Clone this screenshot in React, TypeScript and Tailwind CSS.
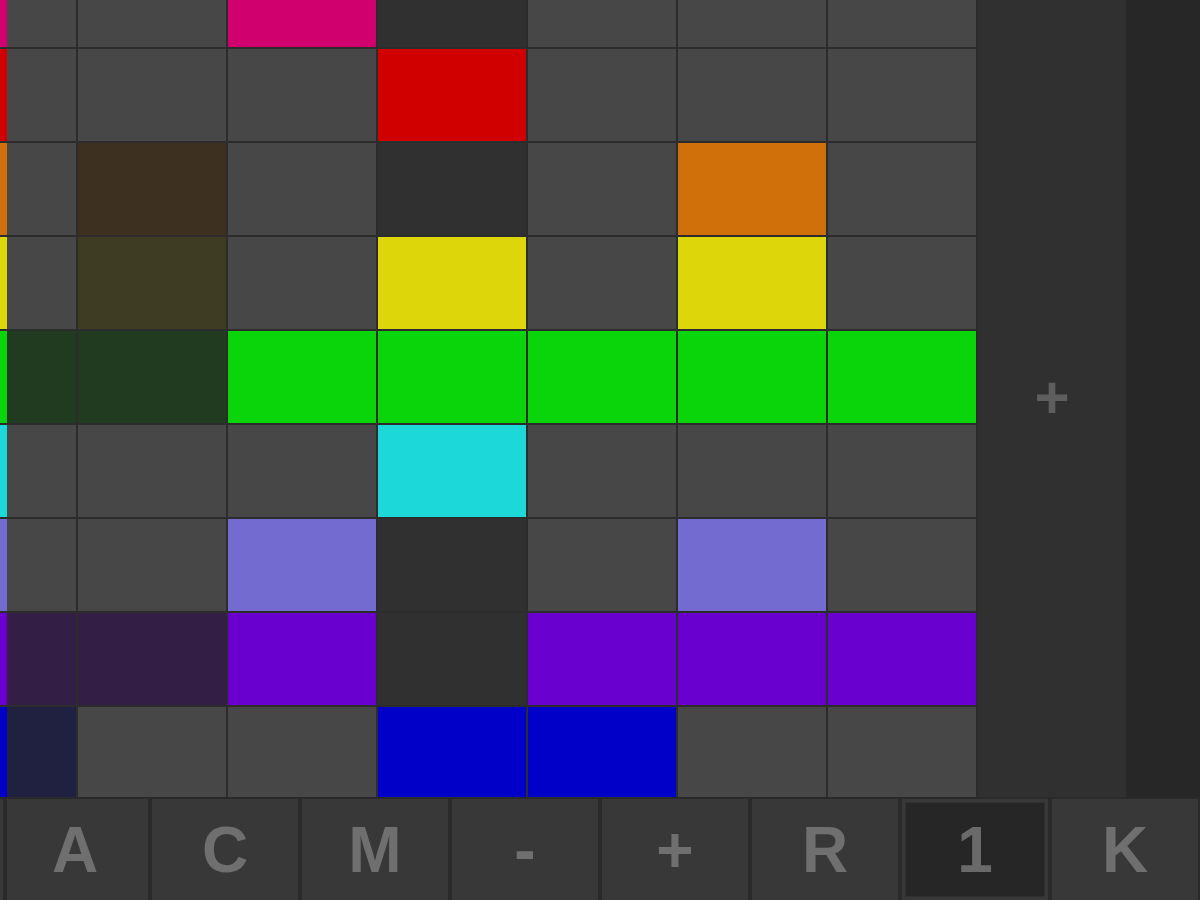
import React from "react";

// cell kinds: g = grey empty, d = dark stopped, b = bright clip, m = dim clip
type Cell = "g" | "d" | "b" | "m";

const rows: { color: string; dim: string; h: string; cells: Cell[] }[] = [
  { color: "bg-[#d1006f]", dim: "bg-[#3d2030]", h: "h-[47px]", cells: ["g", "g", "b", "d", "g", "g", "g"] },
  { color: "bg-[#d00000]", dim: "bg-[#3d2020]", h: "h-[92px]", cells: ["g", "g", "g", "b", "g", "g", "g"] },
  { color: "bg-[#d0700a]", dim: "bg-[#3d3021]", h: "h-[92px]", cells: ["g", "m", "g", "d", "g", "b", "g"] },
  { color: "bg-[#dcd60a]", dim: "bg-[#3e3d23]", h: "h-[92px]", cells: ["g", "m", "g", "b", "g", "b", "g"] },
  { color: "bg-[#0ad40a]", dim: "bg-[#213b21]", h: "h-[92px]", cells: ["m", "m", "b", "b", "b", "b", "b"] },
  { color: "bg-[#1cd8d8]", dim: "bg-[#213b3b]", h: "h-[92px]", cells: ["g", "g", "g", "b", "g", "g", "g"] },
  { color: "bg-[#746bd0]", dim: "bg-[#302d45]", h: "h-[92px]", cells: ["g", "g", "b", "d", "g", "b", "g"] },
  { color: "bg-[#6a00d0]", dim: "bg-[#331f45]", h: "h-[92px]", cells: ["m", "m", "b", "d", "b", "b", "b"] },
  { color: "bg-[#0000c8]", dim: "bg-[#202040]", h: "h-[92px]", cells: ["m", "g", "g", "b", "b", "g", "g"] },
];

const buttons = ["C", "M", "-", "+", "R", "1", "K"];

function cellClass(kind: Cell, color: string, dim: string) {
  if (kind === "b") return color;
  if (kind === "m") return dim;
  if (kind === "d") return "bg-[#303030]";
  return "bg-[#474747]";
}

export default function App() {
  return (
    <div className="w-[1200px] h-[900px] overflow-hidden flex flex-col bg-[#2b2b2b] font-['Liberation_Sans',Arial,sans-serif]">
      <div className="h-[797px] flex overflow-hidden">
        {/* clip grid */}
        <div className="w-[978px] pr-[2px] flex flex-col gap-[2px] bg-[#2c2c2c] overflow-hidden">
          {rows.map((row, r) => (
            <div key={r} className={`grid grid-cols-[76px_repeat(6,148px)] gap-[2px] shrink-0 ${row.h}`}>
              {row.cells.map((kind, c) =>
                c === 0 ? (
                  <div key={c} className="flex">
                    <div className={`w-[7px] ${row.color}`} />
                    <div className={`flex-1 ${cellClass(kind, row.color, row.dim)}`} />
                  </div>
                ) : (
                  <div key={c} className={cellClass(kind, row.color, row.dim)} />
                )
              )}
            </div>
          ))}
        </div>
        {/* scene launch column */}
        <div className="w-[148px] bg-[#303030] flex items-center justify-center">
          <span className="text-[60px] font-bold leading-none text-[#5e5e5e] -mt-[2px]">+</span>
        </div>
        <div className="flex-1 bg-[#272727]" />
      </div>

      {/* bottom toolbar */}
      <div className="flex-1 flex gap-[4px] bg-[#2a2a2a] pt-[2px]">
        <div className="w-[3px] bg-[#383838]" />
        <div className="w-[141px] pr-[5px] bg-[#383838] flex items-center justify-center">
          <span className="text-[64px] font-bold leading-none text-[#6f6f6f]">A</span>
        </div>
        {buttons.map((label) =>
          label === "1" ? (
            <div key={label} className="w-[146px] bg-[#383838] p-[3px] flex">
              <div className="flex-1 bg-[#262626] border border-[#303030] flex items-center justify-center">
                <span className="text-[64px] font-bold leading-none text-[#6a6a6a]">1</span>
              </div>
            </div>
          ) : (
            <div key={label} className="w-[146px] bg-[#383838] flex items-center justify-center">
              <span className="text-[64px] font-bold leading-none text-[#6f6f6f]">{label}</span>
            </div>
          )
        )}
      </div>
    </div>
  );
}
